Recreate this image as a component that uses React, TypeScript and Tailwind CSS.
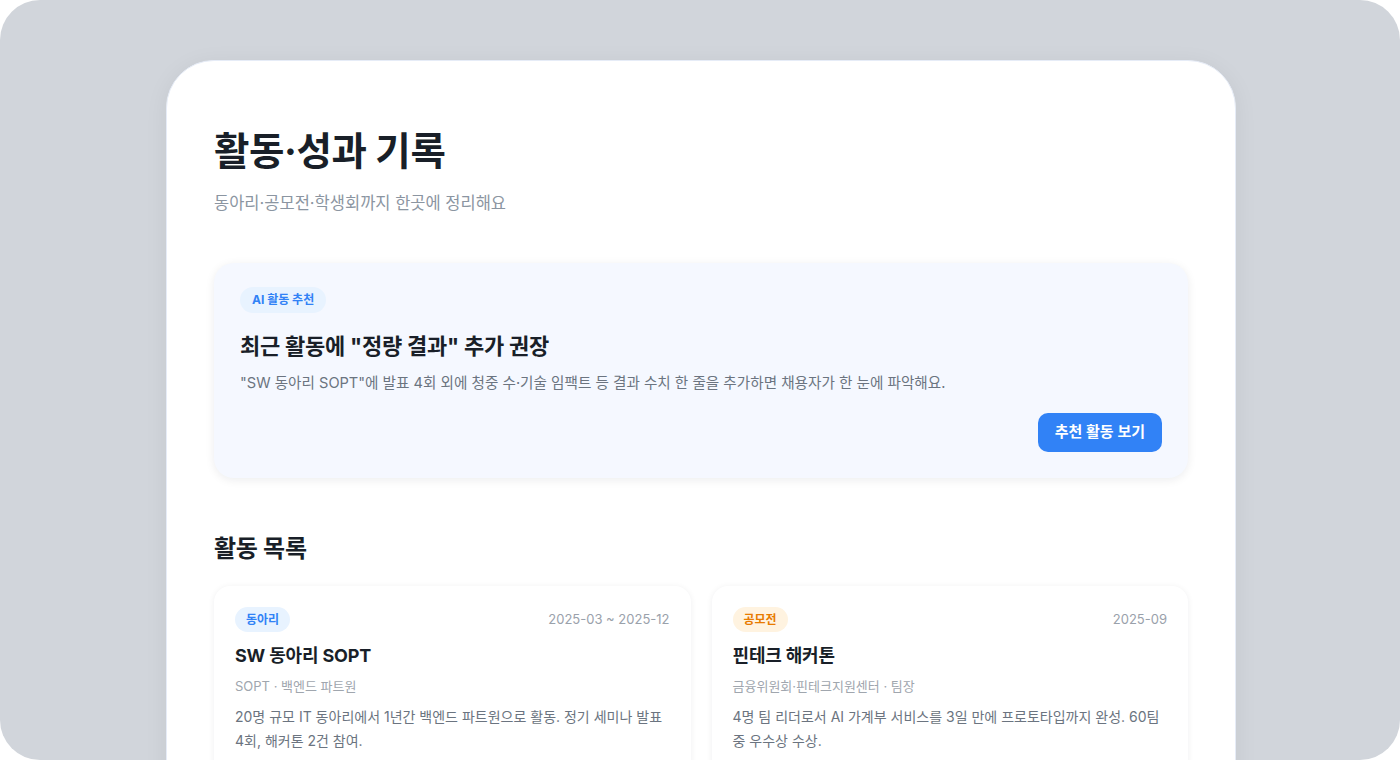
import { type ReactNode } from "react";

type Activity = {
  kind: string;
  tone: "blue" | "orange";
  period: string;
  title: string;
  meta: string;
  body: string;
};

const activities: Activity[] = [
  {
    kind: "동아리",
    tone: "blue",
    period: "2025-03 ~ 2025-12",
    title: "SW 동아리 SOPT",
    meta: "SOPT · 백엔드 파트원",
    body: "20명 규모 IT 동아리에서 1년간 백엔드 파트원으로 활동. 정기 세미나 발표 4회, 해커톤 2건 참여.",
  },
  {
    kind: "공모전",
    tone: "orange",
    period: "2025-09",
    title: "핀테크 해커톤",
    meta: "금융위원회·핀테크지원센터 · 팀장",
    body: "4명 팀 리더로서 AI 가계부 서비스를 3일 만에 프로토타입까지 완성. 60팀 중 우수상 수상.",
  },
];

function Chip({ tone, children }: { tone: "blue" | "orange"; children: ReactNode }) {
  const cls =
    tone === "blue"
      ? "bg-[#e8f3ff] text-[#3182f6]"
      : "bg-[#fff3e0] text-[#e87b00]";
  return (
    <span className={`inline-flex h-[25px] items-center rounded-full px-[11px] text-[12px] font-semibold ${cls}`}>
      {children}
    </span>
  );
}

function ActivityCard({ item }: { item: Activity }) {
  return (
    <div className="rounded-[16px] bg-white px-[21px] pt-[21px] pb-6 shadow-[0_1px_6px_rgba(15,23,42,0.07)]">
      <div className="flex items-center justify-between">
        <Chip tone={item.tone}>{item.kind}</Chip>
        <span className="text-[13px] text-[#9aa1ab]">{item.period}</span>
      </div>
      <div className="mt-[11px] text-[18px] leading-[26px] font-bold tracking-[-0.01em] text-[#191f28]">{item.title}</div>
      <div className="mt-[7px] text-[13px] leading-[20px] text-[#a0a6ae]">{item.meta}</div>
      <p className="mt-[9px] break-keep text-[14px] leading-[24px] text-[#6b7480]">{item.body}</p>
    </div>
  );
}

export default function App() {
  return (
    <div className="h-[760px] w-[1400px] overflow-hidden bg-white font-['Inter','Noto_Sans_CJK_KR',sans-serif]">
      <div className="h-full overflow-hidden rounded-[40px] bg-[#d1d5db] pt-[60px]">
        <main className="ml-[166px] min-h-[760px] w-[1070px] rounded-[48px] border border-[#e6ecf7] bg-white px-[47px] pt-[68px] shadow-[0_4px_24px_rgba(15,23,42,0.06)]">
          <h1 className="text-[38.5px] leading-[44px] font-bold tracking-[-0.01em] text-[#191f28]">활동·성과 기록</h1>
          <p className="mt-[18px] text-[16.5px] leading-[24px] text-[#8b95a1]">동아리·공모전·학생회까지 한곳에 정리해요</p>

          <section className="mt-[48px] rounded-[20px] bg-[#f5f8ff] px-[26px] pt-[23px] pb-[26px] shadow-[0_2px_10px_rgba(15,23,42,0.08)]">
            <span className="inline-flex h-[26px] items-center rounded-full bg-[#e8f3ff] px-3 text-[12px] font-bold text-[#3182f6]">
              AI 활동 추천
            </span>
            <h2 className="mt-[18px] text-[22px] leading-[30px] font-bold tracking-[-0.01em] text-[#191f28]">
              최근 활동에 "정량 결과" 추가 권장
            </h2>
            <p className="mt-[11px] break-keep text-[14.6px] leading-[22px] text-[#6b7480]">
              "SW 동아리 SOPT"에 발표 4회 외에 청중 수·기술 임팩트 등 결과 수치 한 줄을 추가하면 채용자가 한 눈에 파악해요.
            </p>
            <div className="mt-[19px] flex justify-end">
              <button className="h-[39px] rounded-[10px] bg-[#3182f6] px-[17px] text-[15px] font-semibold text-white">
                추천 활동 보기
              </button>
            </div>
          </section>

          <h2 className="mt-[55px] text-[24px] leading-[32px] font-bold tracking-[-0.01em] text-[#191f28]">활동 목록</h2>

          <div className="mt-[21px] grid grid-cols-2 gap-[21px]">
            {activities.map((a) => (
              <ActivityCard key={a.title} item={a} />
            ))}
          </div>
        </main>
      </div>
    </div>
  );
}
